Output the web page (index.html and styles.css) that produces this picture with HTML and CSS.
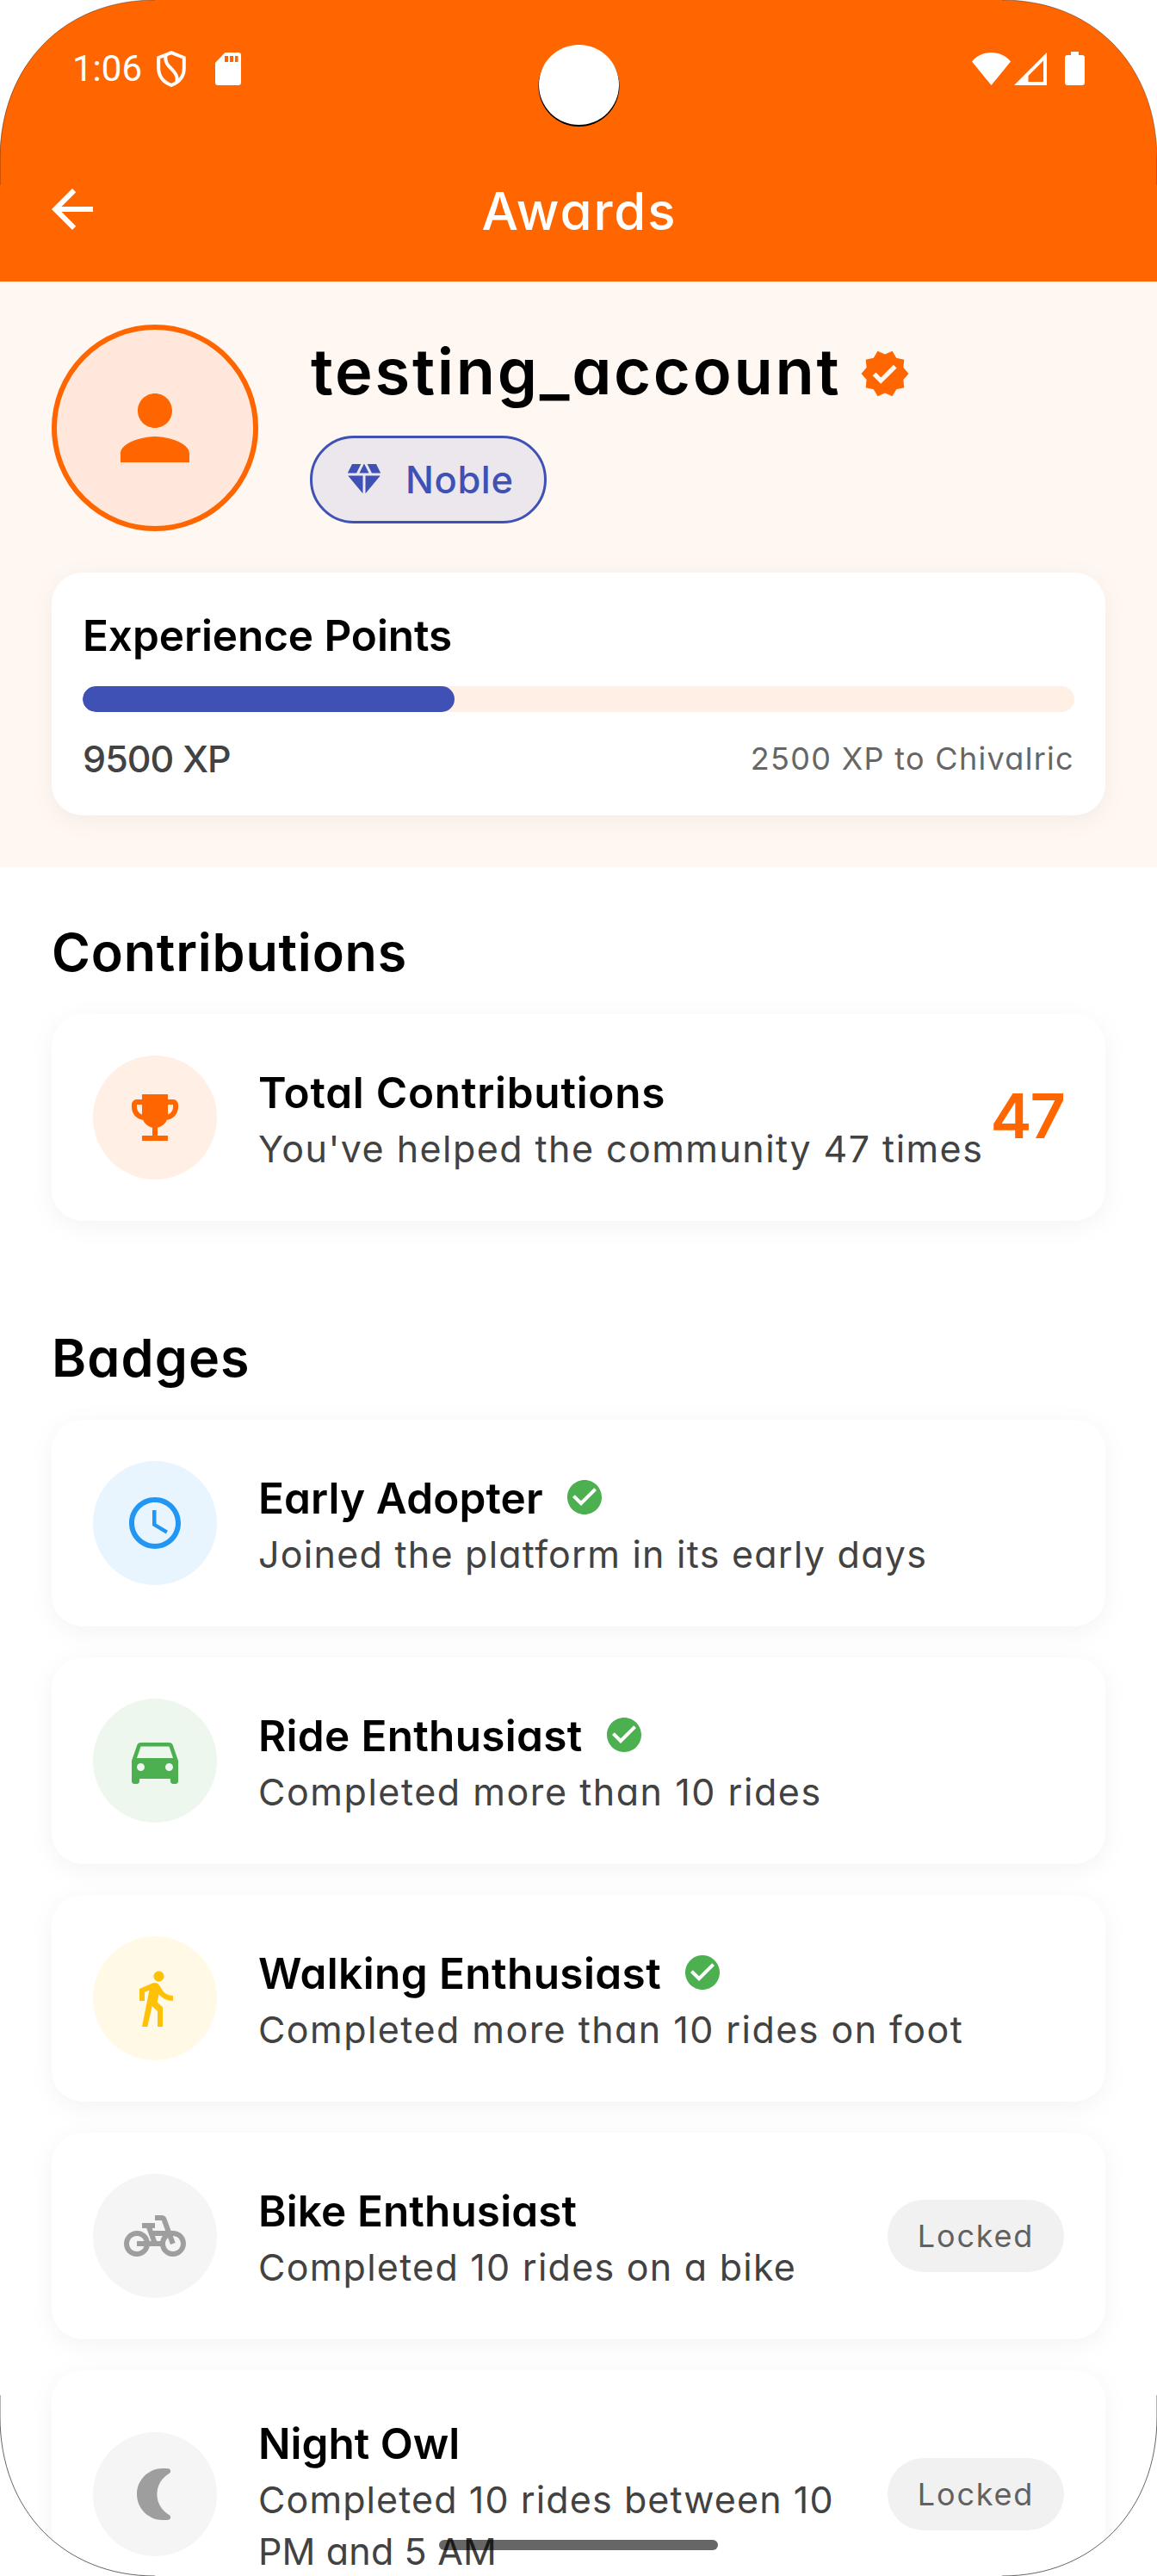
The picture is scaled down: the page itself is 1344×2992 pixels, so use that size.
FILE: index.html
```html
<!DOCTYPE html>
<html lang="en">
<head>
<meta charset="utf-8">
<title>Awards</title>
<link rel="stylesheet" href="styles.css">
</head>
<body>
<div class="screen">
  <header class="top">
    <div class="status">
      <span class="clock">1:06</span>
      <svg class="shield" viewBox="0 0 34 42"><path d="M17 2.200 31.800 8v12c0 9.500-6 16.500-14.800 20C8.200 36.500 2.200 29.500 2.200 20V8z" fill="none" stroke="#fff" stroke-width="4"/><path d="M10.500 5c-1.500 10 4.500 13.500 9 18.500 3.500 4 5 7.500 4 12" fill="none" stroke="#fff" stroke-width="4"/></svg>
      <svg class="sd" viewBox="0 0 30 38"><path fill="#fff" fill-rule="evenodd" d="M11.500 0H27a3 3 0 0 1 3 3v32a3 3 0 0 1-3 3H3a3 3 0 0 1-3-3V12zM11 4v7h4V4zm6 0v7h4V4zm6 0v7h3.500V4z"/></svg>
      <span class="grow"></span>
      <svg class="wifi" viewBox="0 0 45 38"><path fill="#fff" d="M0 10.500C5.500 3.800 13.500 0 22.500 0S39.500 3.800 45 10.500L22.500 38z"/></svg>
      <svg class="signal" viewBox="0 0 38 38"><path fill="#fff" fill-rule="evenodd" d="M38 0v38H0zM34 9.500 16.500 27v7H34z"/></svg>
      <svg class="battery" viewBox="0 0 23 39"><path fill="#fff" d="M7 0h9v4h4a3 3 0 0 1 3 3v29a3 3 0 0 1-3 3H3a3 3 0 0 1-3-3V7a3 3 0 0 1 3-3h4z"/></svg>
    </div>
    <div class="appbar">
      <svg class="back" viewBox="0 0 24 24"><path fill="#fff" d="M20 11H7.830l5.590-5.590L12 4l-8 8 8 8 1.410-1.410L7.830 13H20z"/></svg>
      <h1>Awards</h1>
    </div>
  </header>

  <section class="profile">
    <div class="who">
      <div class="avatar"><svg viewBox="0 0 24 24"><path d="M12 12c2.210 0 4-1.790 4-4s-1.790-4-4-4-4 1.790-4 4 1.790 4 4 4zm0 2c-2.670 0-8 1.340-8 4v2h16v-2c0-2.660-5.330-4-8-4z"/></svg></div>
      <div class="id">
        <div class="name"><span>testing_account</span><svg viewBox="0 0 24 24"><path d="M23 12l-2.440-2.790.34-3.690-3.610-.82-1.890-3.200L12 2.960 8.600 1.500 6.710 4.690 3.100 5.500l.34 3.700L1 12l2.440 2.790-.34 3.700 3.610.82L8.600 22.500l3.400-1.470 3.400 1.460 1.890-3.190 3.610-.82-.34-3.690L23 12zm-12.910 4.720l-3.800-3.810 1.480-1.480 2.320 2.330 5.850-5.870 1.480 1.480-7.330 7.350z"/></svg></div>
        <div class="rank"><svg viewBox="0 0 24 24"><path d="M12.160 3h-.32L9.210 8.250h5.580zm4.300 5.250h5.160L19 3h-5.160zm4.920 1.500h-8.630V20.100zm-10.130 10.350V9.750H2.620zM7.540 8.250 10.160 3H5L2.380 8.250z"/></svg><span>Noble</span></div>
      </div>
    </div>
    <div class="card xp">
      <h3>Experience Points</h3>
      <div class="track"><div class="fill" style="width:37.5%"></div></div>
      <div class="points"><span class="have">9500 XP</span><span class="need">2500 XP to Chivalric</span></div>
    </div>
  </section>

  <section class="group">
    <h2 class="h-contrib">Contributions</h2>
    <div class="card row orange">
      <div class="disc"><svg viewBox="0 0 24 24"><path d="M19 5h-2V3H7v2H5c-1.100 0-2 .9-2 2v1c0 2.550 1.920 4.630 4.390 4.940.63 1.500 1.980 2.630 3.610 2.960V19H7v2h10v-2h-4v-3.100c1.630-.33 2.980-1.460 3.610-2.960C19.080 12.630 21 10.550 21 8V7c0-1.100-.9-2-2-2zM5 8V7h2v3.820C5.840 10.400 5 9.300 5 8zm14 0c0 1.300-.84 2.400-2 2.820V7h2v1z"/></svg></div>
      <div class="text"><h3 class="t-total">Total Contributions</h3><p class="p-help">You've helped the community 47 times</p></div>
      <strong class="count">47</strong>
    </div>
  </section>

  <section class="group">
    <h2 class="h-badges">Badges</h2>
    <div class="list">
      <div class="card row blue">
        <div class="disc"><svg viewBox="0 0 24 24"><path d="M11.990 2C6.470 2 2 6.480 2 12s4.470 10 9.990 10C17.520 22 22 17.520 22 12S17.520 2 11.990 2zM12 20c-4.420 0-8-3.580-8-8s3.580-8 8-8 8 3.580 8 8-3.580 8-8 8zm.5-13H11v6l5.250 3.150.75-1.230-4.500-2.670z"/></svg></div>
        <div class="text"><h3 class="t-early">Early Adopter<svg class="tick" viewBox="0 0 24 24"><path d="M12 2C6.480 2 2 6.480 2 12s4.480 10 10 10 10-4.480 10-10S17.520 2 12 2zm-2 15l-5-5 1.410-1.410L10 14.170l7.590-7.590L19 8l-9 9z"/></svg></h3><p class="p-joined">Joined the platform in its early days</p></div>
      </div>
      <div class="card row green">
        <div class="disc"><svg viewBox="0 0 24 24"><path d="M18.920 6.010C18.720 5.420 18.160 5 17.500 5h-11c-.66 0-1.210.42-1.420 1.010L3 12v8c0 .55.45 1 1 1h1c.55 0 1-.45 1-1v-1h12v1c0 .55.45 1 1 1h1c.55 0 1-.45 1-1v-8l-2.080-5.990zM6.500 16c-.83 0-1.500-.67-1.500-1.500S5.670 13 6.500 13s1.500.67 1.500 1.500S7.330 16 6.500 16zm11 0c-.83 0-1.500-.67-1.500-1.500s.67-1.500 1.500-1.500 1.500.67 1.500 1.500-.67 1.500-1.500 1.500zM5 11l1.500-4.500h11L19 11H5z"/></svg></div>
        <div class="text"><h3 class="t-ride">Ride Enthusiast<svg class="tick" viewBox="0 0 24 24"><path d="M12 2C6.480 2 2 6.480 2 12s4.480 10 10 10 10-4.480 10-10S17.520 2 12 2zm-2 15l-5-5 1.410-1.410L10 14.170l7.590-7.590L19 8l-9 9z"/></svg></h3><p class="p-rides">Completed more than 10 rides</p></div>
      </div>
      <div class="card row amber">
        <div class="disc"><svg viewBox="0 0 24 24"><path d="M13.500 5.500c1.100 0 2-.9 2-2s-.9-2-2-2-2 .9-2 2 .9 2 2 2zM9.800 8.900L7 23h2.100l1.800-8 2.100 2v6h2v-7.500l-2.100-2 .6-3C14.800 12 16.800 13 19 13v-2c-1.900 0-3.500-1-4.300-2.400l-1-1.600c-.4-.6-1-1-1.700-1-.3 0-.5.1-.8.1L6 8.300V13h2V9.600l1.800-.7"/></svg></div>
        <div class="text"><h3 class="t-walk">Walking Enthusiast<svg class="tick" viewBox="0 0 24 24"><path d="M12 2C6.480 2 2 6.480 2 12s4.480 10 10 10 10-4.480 10-10S17.520 2 12 2zm-2 15l-5-5 1.410-1.410L10 14.170l7.590-7.590L19 8l-9 9z"/></svg></h3><p class="p-foot">Completed more than 10 rides on foot</p></div>
      </div>
      <div class="card row gray">
        <div class="disc"><svg viewBox="0 0 24 24"><path d="M18.180 10l-1.700-4.680C16.190 4.530 15.440 4 14.600 4H12v2h2.600l1.460 4h-4.810l-.36-1H12V7H7v2h1.750l1.820 5H9.900c-.44-2.230-2.310-3.880-4.650-3.990C2.450 9.870 0 12.200 0 15s2.200 5 5 5c2.460 0 4.450-1.690 4.900-4h4.200c.44 2.230 2.310 3.880 4.650 3.990 2.800.13 5.250-2.190 5.250-5 0-2.800-2.200-5-5-5h-.82zM7.820 16c-.4 1.170-1.490 2-2.820 2-1.680 0-3-1.320-3-3s1.320-3 3-3c1.330 0 2.420.83 2.820 2H5v2h2.820zm6.280-2h-1.400l-.73-2H15c-.44.58-.76 1.250-.9 2zm4.900 4c-1.680 0-3-1.320-3-3 0-.93.41-1.730 1.050-2.280l.96 2.640 1.880-.68-.97-2.670c.03 0 .06-.01.08-.01 1.680 0 3 1.320 3 3s-1.320 3-3 3z"/></svg></div>
        <div class="text"><h3 class="t-bike">Bike Enthusiast</h3><p class="p-bike">Completed 10 rides on a bike</p></div>
        <span class="locked">Locked</span>
      </div>
      <div class="card row gray">
        <div class="disc"><svg viewBox="0 0 24 24"><path d="M15 2C9.500 2 5 6.500 5 12s4.500 10 10 10c.8 0 1.600 0 2.200-.1.900-.1 1.200-1.300.4-1.800C14.500 18.300 12.800 15.300 12.800 12s1.700-6.300 4.800-8.100c.8-.5.5-1.700-.4-1.800C16.600 2 15.800 2 15 2z"/></svg></div>
        <div class="text"><h3 class="t-owl">Night Owl</h3><p class="p-night">Completed 10 rides between 10 <span class="last">PM and 5 AM</span></p></div>
        <span class="locked">Locked</span>
      </div>
    </div>
  </section>

  <div class="camera"></div>
  <div class="home"></div>
  <svg class="bezel" viewBox="0 0 1344 2992">
    <g fill="#fff">
      <path d="M0 0H180C74 0 0 76 0 185z"/><path d="M1344 0H1164C1270 0 1344 76 1344 185z"/>
      <path d="M0 2992H180C74 2992 0 2916 0 2807z"/><path d="M1344 2992H1164C1270 2992 1344 2916 1344 2807z"/>
    </g>
    <g fill="none" stroke="#000" stroke-width="1">
      <path opacity=".35" d="M180 0C74 0 0 76 0 185v30M1164 0C1270 0 1344 76 1344 185v30"/>
      <path opacity=".6" d="M180 2992C74 2992 0 2916 0 2807v-25M1164 2992C1270 2992 1344 2916 1344 2807v-25"/>
    </g>
  </svg>
</div>
</body>
</html>
```
FILE: styles.css
```css
* { box-sizing: border-box; margin: 0; padding: 0; }

body {
  background: #fff;
  font-family: Inter, "Liberation Sans", sans-serif;
  font-feature-settings: "cv11";
  color: #000;
}

svg { display: block; flex: none; fill: currentColor; }

.screen {
  position: relative;
  width: 1344px;
  height: 2992px;
  overflow: hidden;
  background: #fff;
}

/* Header */
.top { height: 327px; background: #ff6600; color: #fff; }
.status {
  display: flex;
  align-items: center;
  height: 159px;
  padding: 0 84px 0 84px;
}
.clock { width: 98px; font: 400 42px Roboto, sans-serif; }
.shield { width: 34px; height: 42px; }
.sd { width: 30px; height: 38px; margin-left: 34px; }
.grow { flex: 1; }
.wifi { width: 45px; height: 38px; }
.signal { width: 38px; height: 38px; margin-left: 4px; }
.battery { width: 23px; height: 39px; margin-left: 21px; }

.appbar {
  display: grid;
  grid-template-columns: 72px 1fr 72px;
  align-items: center;
  height: 168px;
  padding: 0 48px;
}
.back { width: 72px; height: 72px; }
h1 {
  font-size: 60px;
  font-weight: 500;
  line-height: 72px;
  text-align: center;
  letter-spacing: 1.9px;
  padding: 4px 0 0 2px;
}

/* Profile */
.profile { height: 680px; padding: 50px 60px 60px; background: #fff7f2; }
.who { display: flex; align-items: center; gap: 60px; }
.avatar {
  display: flex;
  align-items: center;
  justify-content: center;
  width: 240px;
  height: 240px;
  border: 6px solid #ff6600;
  border-radius: 50%;
  background: #ffe8db;
  color: #ff6600;
}
.avatar svg { width: 120px; height: 120px; }
.id { display: flex; flex-direction: column; align-items: flex-start; gap: 24px; }
.name {
  display: flex;
  align-items: center;
  gap: 21px;
  height: 96px;
  font-size: 74px;
  font-weight: 600;
  letter-spacing: 2.7px;
}
.name span { line-height: 90px; padding: 0 0 6px 1px; }
.name svg { width: 60px; height: 60px; color: #ff6600; }
.rank {
  display: flex;
  align-items: center;
  gap: 24px;
  height: 102px;
  padding: 0 35px 0 36px;
  border: 3px solid #3f51b5;
  border-radius: 51px;
  background: #ece7ed;
  color: #3f51b5;
  font-size: 43.5px;
  font-weight: 500;
  letter-spacing: 0.6px;
}
.rank svg { width: 48px; height: 48px; }

/* Cards */
.card {
  border-radius: 36px;
  background: #fff;
  box-shadow: 0 6px 30px rgba(0, 0, 0, 0.05);
}
h3 {
  display: flex;
  align-items: center;
  gap: 24px;
  height: 72px;
  padding-top: 1px;
  font-size: 49.5px;
  font-weight: 600;
  line-height: 72px;
  white-space: nowrap;
}
.xp { height: 282px; margin-top: 48px; padding: 36px; }
.xp h3 { letter-spacing: -0.1px; }
.track {
  height: 30px;
  margin: 24px 0;
  border-radius: 15px;
  background: #ffefe5;
  overflow: hidden;
}
.fill { height: 100%; border-radius: 15px; background: #3f51b5; }
.points { display: flex; justify-content: space-between; line-height: 60px; }
.have { font-size: 43px; font-weight: 500; letter-spacing: -0.95px; color: #424242; }
.need { font-size: 36px; letter-spacing: 1.3px; color: #666; }

.group { padding: 0 60px; }
.group + .group { padding-top: 60px; }
h2 { font-size: 61px; font-weight: 600; line-height: 90px; padding: 54px 0 27px; }
.list { display: flex; flex-direction: column; gap: 36px; }

.row { display: flex; align-items: center; min-height: 240px; padding: 48px; }
.disc {
  display: flex;
  flex: none;
  align-items: center;
  justify-content: center;
  width: 144px;
  height: 144px;
  margin-right: 48px;
  border-radius: 50%;
}
.disc svg { width: 72px; height: 72px; }
.orange .disc { background: #ffefe5; color: #ff6600; }
.blue .disc { background: #e8f4fe; color: #2196f3; }
.green .disc { background: #edf7ed; color: #4caf50; }
.amber .disc { background: #fff9e6; color: #ffc107; }
.gray .disc { background: #f5f5f5; color: #9e9e9e; }

.text { flex: 1; min-width: 0; }
.text p { font-size: 43px; line-height: 60px; color: #424242; white-space: nowrap; }
.last { display: block; }
.tick { width: 48px; height: 48px; margin-bottom: 2px; color: #4caf50; }
.count {
  padding-bottom: 5px;
  font-size: 72px;
  font-weight: 600;
  letter-spacing: -2px;
  color: #ff6600;
}
.locked {
  width: 205px;
  height: 84px;
  border-radius: 42px;
  background: #f1f1f1;
  color: #616161;
  font-size: 36px;
  line-height: 84px;
  letter-spacing: 1.8px;
  text-align: center;
}

/* Optical tracking per label */
.h-contrib { letter-spacing: 0.8px; }
.h-badges { letter-spacing: 1.1px; }
.t-total { letter-spacing: 0.75px; }
.t-early { letter-spacing: 0.1px; }
.t-ride { letter-spacing: 0.3px; }
.t-walk { letter-spacing: 0.4px; }
.t-bike { letter-spacing: 0.1px; }
.t-owl { letter-spacing: 0; }
.p-help { letter-spacing: 1.45px; }
.p-joined { letter-spacing: 1.25px; }
.p-rides { letter-spacing: 1.55px; }
.p-foot { letter-spacing: 1.45px; }
.p-bike { letter-spacing: 1.25px; }
.p-night { letter-spacing: 1.1px; }
.last { letter-spacing: 0.15px; }

/* Device overlays */
.camera {
  position: absolute;
  left: 626px;
  top: 52px;
  width: 93px;
  height: 93px;
  border-radius: 50%;
  background: #fff;
  box-shadow: 0 1.5px 0 0.5px #000;
}
.home {
  position: absolute;
  left: 510px;
  top: 2950px;
  width: 324px;
  height: 12px;
  border-radius: 6px;
  background: rgba(0, 0, 0, 0.6);
}
.bezel { position: absolute; inset: 0; width: 1344px; height: 2992px; }
```
